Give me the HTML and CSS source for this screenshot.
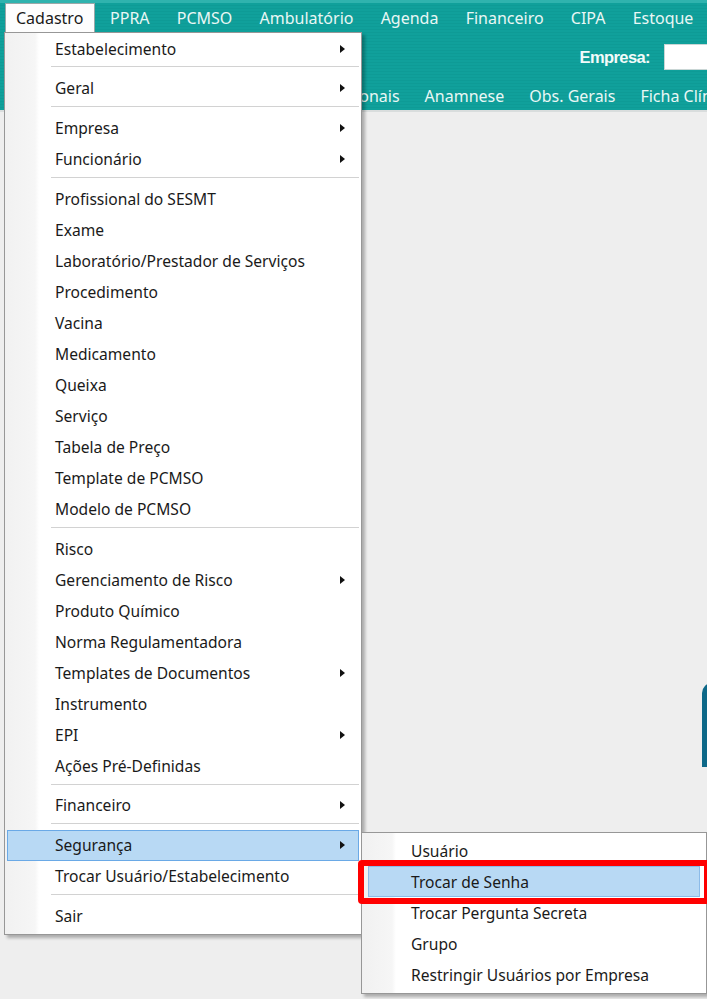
FILE: index.html
```html
<!DOCTYPE html>
<html lang="pt-BR">
<head>
<meta charset="utf-8">
<title>Cadastro</title>
<link rel="stylesheet" href="styles.css">
</head>
<body>
<div class="app">
  <header class="appbar">
    <nav class="menubar">
      <span class="mb-item active">Cadastro</span>
      <span class="mb-item">PPRA</span>
      <span class="mb-item">PCMSO</span>
      <span class="mb-item">Ambulatório</span>
      <span class="mb-item">Agenda</span>
      <span class="mb-item">Financeiro</span>
      <span class="mb-item">CIPA</span>
      <span class="mb-item">Estoque</span>
    </nav>
    <div class="toolbar">
      <span class="emp-label">Empresa:</span>
      <span class="emp-input"></span>
    </div>
    <div class="tabs">
      <span class="tab">Profissionais</span>
      <span class="tab">Anamnese</span>
      <span class="tab">Obs. Gerais</span>
      <span class="tab">Ficha Clínica</span>
    </div>
  </header>
  <main class="workspace">
    <div class="logo-shape"></div>
  </main>

  <div class="menu main-menu">
    <div class="mi sub">Estabelecimento</div>
    <div class="sep"></div>
    <div class="mi sub">Geral</div>
    <div class="sep"></div>
    <div class="mi sub">Empresa</div>
    <div class="mi sub">Funcionário</div>
    <div class="sep"></div>
    <div class="mi">Profissional do SESMT</div>
    <div class="mi">Exame</div>
    <div class="mi">Laboratório/Prestador de Serviços</div>
    <div class="mi">Procedimento</div>
    <div class="mi">Vacina</div>
    <div class="mi">Medicamento</div>
    <div class="mi">Queixa</div>
    <div class="mi">Serviço</div>
    <div class="mi">Tabela de Preço</div>
    <div class="mi">Template de PCMSO</div>
    <div class="mi">Modelo de PCMSO</div>
    <div class="sep"></div>
    <div class="mi">Risco</div>
    <div class="mi sub">Gerenciamento de Risco</div>
    <div class="mi">Produto Químico</div>
    <div class="mi">Norma Regulamentadora</div>
    <div class="mi sub">Templates de Documentos</div>
    <div class="mi">Instrumento</div>
    <div class="mi sub">EPI</div>
    <div class="mi">Ações Pré-Definidas</div>
    <div class="sep"></div>
    <div class="mi sub">Financeiro</div>
    <div class="sep"></div>
    <div class="mi sub hot">Segurança</div>
    <div class="mi">Trocar Usuário/Estabelecimento</div>
    <div class="sep"></div>
    <div class="mi">Sair</div>
  </div>

  <div class="menu sub-menu">
    <div class="mi">Usuário</div>
    <div class="mi hot">Trocar de Senha</div>
    <div class="mi">Trocar Pergunta Secreta</div>
    <div class="mi">Grupo</div>
    <div class="mi">Restringir Usuários por Empresa</div>
  </div>

  <div class="red-mark"></div>
</div>
</body>
</html>
```

FILE: styles.css
```css
* { box-sizing: border-box; }

html, body {
  margin: 0;
  padding: 0;
  width: 707px;
  height: 999px;
  overflow: hidden;
  background: #eeeeee;
  font-family: "Noto Sans", "Open Sans", "DejaVu Sans", sans-serif;
  font-size: 15.6px;
  color: #1a1a1a;
}

.app {
  position: relative;
  width: 707px;
  height: 999px;
  overflow: hidden;
}

.appbar {
  height: 112px;
  overflow: hidden;
  background: repeating-linear-gradient(180deg, #10a09b 0px, #10a09b 2px, #0e9b96 2px, #0e9b96 3px);
  border-top: 3px solid #2fb3ae;
  border-bottom: 2px solid #d9dddd;
  display: flex;
  flex-direction: column;
}

.menubar {
  display: flex;
  height: 29px;
  padding-left: 5px;
  font-size: 16px;
}

.mb-item {
  display: flex;
  align-items: center;
  padding: 0 13.6px;
  color: #e9f7f5;
  white-space: nowrap;
}

.mb-item.active {
  background: #fdfdfd;
  color: #1a1a1a;
  border: 1px solid #9aa8a8;
  border-bottom: none;
  padding: 0 10px;
  width: 91px;
  margin-right: 1px;
}

.toolbar {
  height: 44px;
  padding-top: 6px;
  display: flex;
  align-items: center;
  justify-content: flex-end;
  gap: 14px;
}

.emp-label {
  font-family: "Liberation Sans", Arial, sans-serif;
  font-weight: bold;
  font-size: 16.5px;
  color: #f3fbfa;
  letter-spacing: -0.6px;
}

.emp-input {
  width: 43px;
  height: 26px;
  background: #ffffff;
  border: 1px solid #c9d6d5;
  border-right: none;
}

.tabs {
  display: flex;
  align-items: center;
  height: 34px;
  padding-top: 6px;
  padding-left: 292px;
  font-size: 16px;
  overflow: hidden;
}

.tab {
  color: #e9f7f5;
  padding: 0 12.5px;
  white-space: nowrap;
}

.workspace {
  position: relative;
  height: 887px;
}

.logo-shape {
  position: absolute;
  left: 702px;
  top: 571px;
  width: 20px;
  height: 84px;
  background: #0d6888;
  border-radius: 10px 0 0 0;
}

.menu {
  position: absolute;
  background: linear-gradient(90deg, #f1f1f1 0px, #f6f6f6 30px, #ffffff 34px);
  border: 1px solid #979797;
  box-shadow: 3px 3px 3px rgba(0, 0, 0, 0.28);
  padding: 0 2px 1px;
}

.main-menu {
  left: 4px;
  top: 32px;
  width: 358px;
  height: 903px;
}

.sub-menu {
  left: 361px;
  top: 832px;
  width: 346px;
  height: 162px;
  padding-top: 2px;
}

.mi {
  position: relative;
  height: 31px;
  display: flex;
  align-items: center;
  padding-left: 47px;
  white-space: nowrap;
  border: 1px solid transparent;
}

.sub-menu .mi {
  padding-left: 46px;
}

.mi.sub::after {
  content: "";
  position: absolute;
  right: 13px;
  top: 50%;
  margin-top: -4px;
  border-left: 5px solid #111;
  border-top: 4px solid transparent;
  border-bottom: 4px solid transparent;
}

.mi.hot {
  background: #b8d9f4;
  border-color: #6aa9e6;
}

.sub-menu .mi.hot {
  margin: 0 4px;
  padding-left: 42px;
  border-color: #8cbbe8;
}

.sep {
  height: 8.8px;
  margin-left: 44px;
  display: flex;
  align-items: center;
}

.sep::before {
  content: "";
  display: block;
  width: 100%;
  height: 2px;
  border-top: 1px solid #d2d2d2;
  border-bottom: 1px solid #ffffff;
}

.red-mark {
  position: absolute;
  left: 358px;
  top: 860px;
  width: 352px;
  height: 44px;
  border: 6px solid #ff0000;
  border-radius: 4px;
}
```
